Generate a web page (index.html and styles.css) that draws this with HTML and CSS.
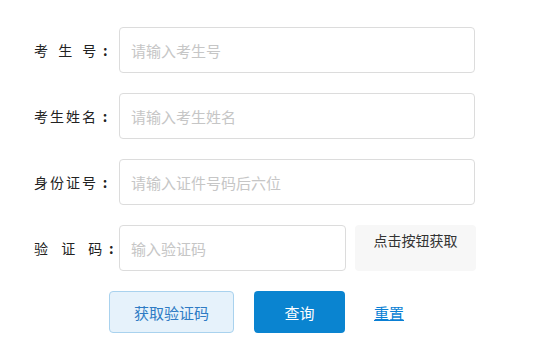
FILE: index.html
```html
<!DOCTYPE html>
<html lang="zh-CN">
<head>
<meta charset="utf-8">
<title>查询</title>
<link rel="stylesheet" href="styles.css">
</head>
<body>
<form class="form">
  <div class="row">
    <label class="label"><span class="name spaced">考 生 号</span><span class="colon">:</span></label>
    <input class="field" type="text" placeholder="请输入考生号">
  </div>
  <div class="row">
    <label class="label"><span class="name">考生姓名</span><span class="colon">:</span></label>
    <input class="field" type="text" placeholder="请输入考生姓名">
  </div>
  <div class="row">
    <label class="label"><span class="name">身份证号</span><span class="colon">:</span></label>
    <input class="field" type="text" placeholder="请输入证件号码后六位">
  </div>
  <div class="row">
    <label class="label"><span class="name wide">验 证 码</span><span class="colon colon-far">:</span></label>
    <input class="field field-code" type="text" placeholder="输入验证码">
    <div class="code-box">点击按钮获取</div>
  </div>
  <div class="actions">
    <button type="button" class="btn btn-light">获取验证码</button>
    <button type="button" class="btn btn-primary">查询</button>
    <a class="reset" href="#">重置</a>
  </div>
</form>
</body>
</html>
```
FILE: styles.css
```css
html, body {
  margin: 0;
  padding: 0;
  background: #ffffff;
}

body {
  font-family: "Noto Sans CJK SC", "Noto Sans", sans-serif;
  color: #333333;
}

.form {
  padding: 27px 0 0 34px;
}

.row {
  display: flex;
  align-items: center;
  height: 46px;
  margin-bottom: 20px;
}

.label {
  display: flex;
  align-items: center;
  width: 85px;
  flex: none;
  font-size: 14px;
  line-height: 20px;
  color: #222222;
}

.name {
  flex: none;
  letter-spacing: 2px;
  white-space: pre;
}

.spaced {
  word-spacing: 3px;
}

.wide {
  word-spacing: 6px;
}

.colon {
  flex: none;
  width: 14px;
  margin-left: auto;
  margin-right: 7px;
  text-align: center;
  font-weight: bold;
}

.colon-far {
  margin-right: 3px;
}

.field {
  box-sizing: border-box;
  width: 356px;
  height: 46px;
  margin: 0;
  padding: 0 11px;
  border: 1px solid #dcdcdc;
  border-radius: 4px;
  background: #ffffff;
  font-family: "Noto Sans CJK SC", sans-serif;
  font-size: 15px;
  color: #333333;
  outline: none;
}

.field::placeholder {
  color: #c6c6c6;
}

.field-code {
  width: 227px;
}

.code-box {
  box-sizing: border-box;
  width: 121px;
  height: 46px;
  margin-left: 9px;
  padding-top: 5px;
  border-radius: 4px;
  background: #f7f7f7;
  text-align: center;
  font-size: 14px;
  line-height: 20px;
  color: #333333;
}

.actions {
  display: flex;
  align-items: center;
  margin-left: 75px;
}

.btn {
  box-sizing: border-box;
  height: 42px;
  margin: 0;
  padding: 0;
  border-radius: 4px;
  font-family: "Noto Sans CJK SC", sans-serif;
  font-size: 15px;
  cursor: pointer;
}

.btn-light {
  width: 125px;
  border: 1px solid #a9d2ee;
  background: #e6f2fb;
  color: #2e7bc4;
}

.btn-primary {
  width: 91px;
  margin-left: 20px;
  border: none;
  background: #0a84d0;
  color: #ffffff;
}

.reset {
  margin-left: 29px;
  font-size: 15px;
  color: #0a7fd4;
  text-decoration: underline;
}
```
